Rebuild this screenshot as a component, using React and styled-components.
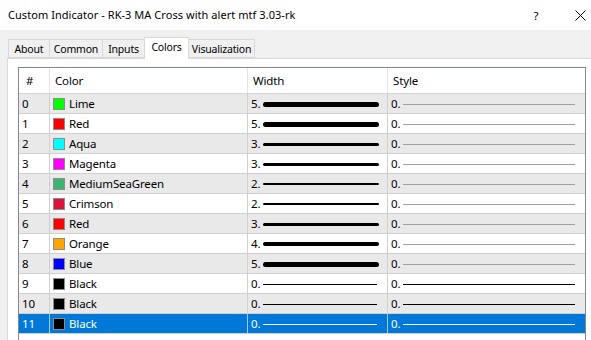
import React from 'react';
import styled, {createGlobalStyle} from 'styled-components';

const Global = createGlobalStyle`
  html, body {
    margin: 0;
    padding: 0;
    background: #f0f0f0;
    overflow: hidden;
  }
  body {
    font-family: "Noto Sans", "Open Sans", Arial, sans-serif;
    font-size: 11.5px;
    letter-spacing: -0.15px;
    color: #000;
  }
`;

const Window = styled.div`
  width: 591px;
  height: 340px;
  display: flex;
  flex-direction: column;
  overflow: hidden;
`;

const TitleBar = styled.div`
  height: 30px;
  flex-shrink: 0;
  background: #fff;
  display: flex;
  align-items: center;
  padding-left: 8px;
`;

const Title = styled.div`
  flex: 1;
  font-size: 11px;
  letter-spacing: 0.05px;
  margin-top: -1px;
`;

const TitleButton = styled.div`
  width: ${p => p.w}px;
  margin-right: ${p => p.gap || 0}px;
  height: 30px;
  display: flex;
  align-items: center;
  justify-content: center;
`;

const Body = styled.div`
  flex: 1;
  display: flex;
  flex-direction: column;
  padding: 7px 0 0 7px;
  min-height: 0;
`;

const Tabs = styled.div`
  display: flex;
  align-items: flex-end;
  padding-left: 1px;
  height: 21px;
  position: relative;
  z-index: 1;
`;

const Tab = styled.div`
  width: ${p => p.w}px;
  height: ${p => p.active ? '22px' : '19px'};
  box-sizing: border-box;
  border: 1px solid #d9d9d9;
  border-bottom: ${p => p.active ? 'none' : '1px solid #d9d9d9'};
  margin-left: ${p => p.first ? '0' : '-1px'};
  margin-bottom: ${p => p.active ? '-1px' : '0'};
  background: ${p => p.active ? '#fff' : '#f0f0f0'};
  display: flex;
  justify-content: center;
  align-items: ${p => p.active ? 'flex-start' : 'center'};
  padding-top: ${p => p.active ? '1px' : '0'};
  line-height: 16px;
  font-size: 10.5px;
  letter-spacing: -0.2px;
  white-space: nowrap;
  z-index: ${p => p.active ? 2 : 1};
`;

const Panel = styled.div`
  flex: 1;
  background: #fff;
  border: 1px solid #d9d9d9;
  border-right: none;
  border-bottom: none;
  padding: 8px 0 0 10px;
  min-height: 0;
`;

const Table = styled.div`
  width: 568px;
  height: 300px;
  box-sizing: border-box;
  border: 1px solid #828790;
  background: #fff;
`;

const Row = styled.div`
  display: grid;
  grid-template-columns: 31px 198px 140px 1fr;
  height: ${p => p.header ? '26px' : '20px'};
  background: ${p => p.selected ? '#0078d7' : p.alt ? '#e9e9e9' : '#fff'};
  color: ${p => p.selected ? '#fff' : '#000'};
  border-bottom: 1px solid ${p => p.header ? '#d5d5d5' : '#d0d0d0'};
  box-sizing: border-box;
`;

const Cell = styled.div`
  display: flex;
  align-items: center;
  padding-left: ${p => p.pad || 3}px;
  border-right: ${p => p.last ? 'none' : `1px solid ${p.line || '#d0d0d0'}`};
  white-space: nowrap;
  overflow: hidden;
`;

const Swatch = styled.span`
  width: 12px;
  height: 12px;
  box-sizing: border-box;
  border: 1px solid #8c8c8c;
  background: ${p => p.color};
  margin-right: 4px;
  flex-shrink: 0;
`;

const LineLabel = styled.span`
  width: 12px;
  flex-shrink: 0;
`;

const Stroke = styled.span`
  display: block;
  width: ${p => p.len}px;
  height: ${p => p.thick}px;
  border-radius: ${p => p.thick > 1 ? p.thick / 2 : 0}px;
  background: ${p => p.color};
  margin-top: 1px;
`;

const tabs = [
  {label: 'About', w: 42},
  {label: 'Common', w: 54},
  {label: 'Inputs', w: 43},
  {label: 'Colors', w: 45, active: true},
  {label: 'Visualization', w: 67},
];

const rows = [
  {name: 'Lime', color: '#00ff00', w: 5},
  {name: 'Red', color: '#ff0000', w: 5},
  {name: 'Aqua', color: '#00ffff', w: 3},
  {name: 'Magenta', color: '#ff00ff', w: 3},
  {name: 'MediumSeaGreen', color: '#3cb371', w: 2},
  {name: 'Crimson', color: '#dc143c', w: 2},
  {name: 'Red', color: '#ff0000', w: 3},
  {name: 'Orange', color: '#ffa500', w: 4},
  {name: 'Blue', color: '#0000ff', w: 5},
  {name: 'Black', color: '#000000', w: 0},
  {name: 'Black', color: '#000000', w: 0},
  {name: 'Black', color: '#000000', w: 0},
];

const thickness = {0: 1, 2: 2, 3: 3, 4: 4, 5: 5};

export default function App() {
  return (
    <Window>
      <Global />
      <TitleBar>
        <Title>Custom Indicator - RK-3 MA Cross with alert mtf 3.03-rk</Title>
        <TitleButton w={24} gap={21}>?</TitleButton>
        <TitleButton w={22}>
          <svg width="11" height="11" viewBox="0 0 11 11">
            <path d="M0.5 0.5 L10.5 10.5 M10.5 0.5 L0.5 10.5" stroke="#000" strokeWidth="1" fill="none" />
          </svg>
        </TitleButton>
      </TitleBar>
      <Body>
        <Tabs>
          {tabs.map((t, i) => (
            <Tab key={t.label} w={t.w} first={i === 0} active={t.active}>{t.label}</Tab>
          ))}
        </Tabs>
        <Panel>
          <Table>
            <Row header>
              <Cell pad={7} line="#e5e5e5">#</Cell>
              <Cell pad={5} line="#e5e5e5">Color</Cell>
              <Cell pad={5} line="#e5e5e5">Width</Cell>
              <Cell pad={5} last>Style</Cell>
            </Row>
            {rows.map((r, i) => {
              const sel = i === 11;
              const ink = sel ? '#fff' : '#000';
              const styleInk = sel ? '#fff' : i >= 9 ? '#000' : '#a0a0a0';
              const line = sel ? '#a6cbef' : '#d0d0d0';
              return (
                <Row key={i} alt={i % 2 === 0} selected={sel}>
                  <Cell line={line}>{i}</Cell>
                  <Cell line={line}><Swatch color={r.color} />{r.name}</Cell>
                  <Cell line={line}>
                    <LineLabel>{r.w}.</LineLabel>
                    <Stroke len={r.w === 0 ? 114 : 116} thick={thickness[r.w]} color={ink} />
                  </Cell>
                  <Cell last>
                    <LineLabel>0.</LineLabel>
                    <Stroke len={172} thick={1} color={styleInk} />
                  </Cell>
                </Row>
              );
            })}
          </Table>
        </Panel>
      </Body>
    </Window>
  );
}
